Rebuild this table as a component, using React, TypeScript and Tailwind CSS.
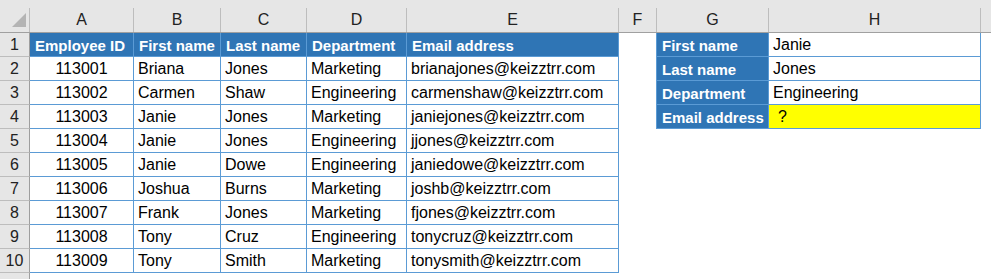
// Excel sheet — employee lookup table
const BLUE = "border-[#5b9bd5]";

interface Employee {
  id: string;
  first: string;
  last: string;
  dept: string;
  email: string;
}

const employees: Employee[] = [
  { id: "113001", first: "Briana", last: "Jones", dept: "Marketing", email: "brianajones@keizztrr.com" },
  { id: "113002", first: "Carmen", last: "Shaw", dept: "Engineering", email: "carmenshaw@keizztrr.com" },
  { id: "113003", first: "Janie", last: "Jones", dept: "Marketing", email: "janiejones@keizztrr.com" },
  { id: "113004", first: "Janie", last: "Jones", dept: "Engineering", email: "jjones@keizztrr.com" },
  { id: "113005", first: "Janie", last: "Dowe", dept: "Engineering", email: "janiedowe@keizztrr.com" },
  { id: "113006", first: "Joshua", last: "Burns", dept: "Marketing", email: "joshb@keizztrr.com" },
  { id: "113007", first: "Frank", last: "Jones", dept: "Marketing", email: "fjones@keizztrr.com" },
  { id: "113008", first: "Tony", last: "Cruz", dept: "Engineering", email: "tonycruz@keizztrr.com" },
  { id: "113009", first: "Tony", last: "Smith", dept: "Marketing", email: "tonysmith@keizztrr.com" },
];

const lookup = [
  { label: "First name", value: "Janie" },
  { label: "Last name", value: "Jones" },
  { label: "Department", value: "Engineering" },
  { label: "Email address", value: "?" },
];

const columns = [
  { name: "A", w: "w-[104px]" },
  { name: "B", w: "w-[87px]" },
  { name: "C", w: "w-[86px]" },
  { name: "D", w: "w-[100px]" },
  { name: "E", w: "w-[212px]" },
  { name: "F", w: "w-[38px]" },
  { name: "G", w: "w-[112px]" },
  { name: "H", w: "w-[212px]" },
];

function RowHeader({ n }: { n?: number }) {
  return (
    <div className="flex h-[24px] w-[30px] shrink-0 items-center justify-center border-r border-b border-r-[#9e9e9e] border-b-[#bdbdbd] bg-[#e6e6e6] pt-px text-[#222]">
      {n}
    </div>
  );
}

// table header cell (blue, bold, white)
function HeadCell({ w, text }: { w: string; text: string }) {
  return (
    <div className={`flex h-[24px] ${w} shrink-0 items-center border-r border-b ${BLUE} bg-[#2f75b5] pt-px pl-[5px] text-[15px] font-bold whitespace-nowrap text-white`}>
      {text}
    </div>
  );
}

function Cell({ w, text, center }: { w: string; text: string; center?: boolean }) {
  return (
    <div
      className={`flex h-[24px] ${w} shrink-0 items-center border-r border-b ${BLUE} bg-white pt-px whitespace-nowrap text-black ${center ? "justify-center" : "pl-[4px]"}`}
    >
      {text}
    </div>
  );
}

export default function App() {
  return (
    <div className="h-[279px] w-[991px] overflow-hidden bg-white font-['Liberation_Sans',Arial,sans-serif] text-[16px] leading-none">
      {/* column letters */}
      <div className="flex h-[33px] border-b border-[#a0a0a0] bg-[#e6e6e6]">
        <div className="relative w-[30px] shrink-0 self-end">
          <div className="h-[24px] border-r border-[#bdbdbd]">
            <svg width="29" height="24" viewBox="0 0 29 24" className="absolute top-0 left-0">
              <polygon points="12,19 26,19 26,5" fill="#b4b4b4" />
            </svg>
          </div>
        </div>
        {columns.map((c) => (
          <div
            key={c.name}
            className={`flex h-[24px] ${c.w} shrink-0 items-center justify-center self-end border-r border-[#bdbdbd] text-[#222]`}
          >
            {c.name}
          </div>
        ))}
      </div>

      {/* row 1 */}
      <div className="flex">
        <RowHeader n={1} />
        <HeadCell w="w-[104px]" text="Employee ID" />
        <HeadCell w="w-[87px]" text="First name" />
        <HeadCell w="w-[86px]" text="Last name" />
        <HeadCell w="w-[100px]" text="Department" />
        <HeadCell w="w-[212px]" text="Email address" />
        <div className="w-[37px] shrink-0" />
        <div className={`flex h-[24px] w-[113px] shrink-0 items-center border-x border-b ${BLUE} bg-[#2f75b5] pt-px pl-[5px] text-[15px] font-bold text-white`}>
          {lookup[0].label}
        </div>
        <Cell w="w-[212px]" text={lookup[0].value} />
      </div>

      {employees.map((e, i) => {
        const side = lookup[i + 1];
        return (
          <div key={e.id} className="flex">
            <RowHeader n={i + 2} />
            <Cell w="w-[104px]" text={e.id} center />
            <Cell w="w-[87px]" text={e.first} />
            <Cell w="w-[86px]" text={e.last} />
            <Cell w="w-[100px]" text={e.dept} />
            <Cell w="w-[212px]" text={e.email} />
            <div className="w-[37px] shrink-0" />
            {side && (
              <>
                <div className={`flex h-[24px] w-[113px] shrink-0 items-center border-x border-b ${BLUE} bg-[#2f75b5] pt-px pl-[5px] text-[15px] font-bold whitespace-nowrap text-white`}>
                  {side.label}
                </div>
                {side.value === "?" ? (
                  <div className={`flex h-[24px] w-[212px] shrink-0 items-center border-r border-b ${BLUE} bg-[#ffff00] pt-px pl-[9px] text-black`}>
                    ?
                  </div>
                ) : (
                  <Cell w="w-[212px]" text={side.value} />
                )}
              </>
            )}
          </div>
        );
      })}

      {/* row 11, cut off at the window edge */}
      <div className="flex">
        <RowHeader />
      </div>
    </div>
  );
}
